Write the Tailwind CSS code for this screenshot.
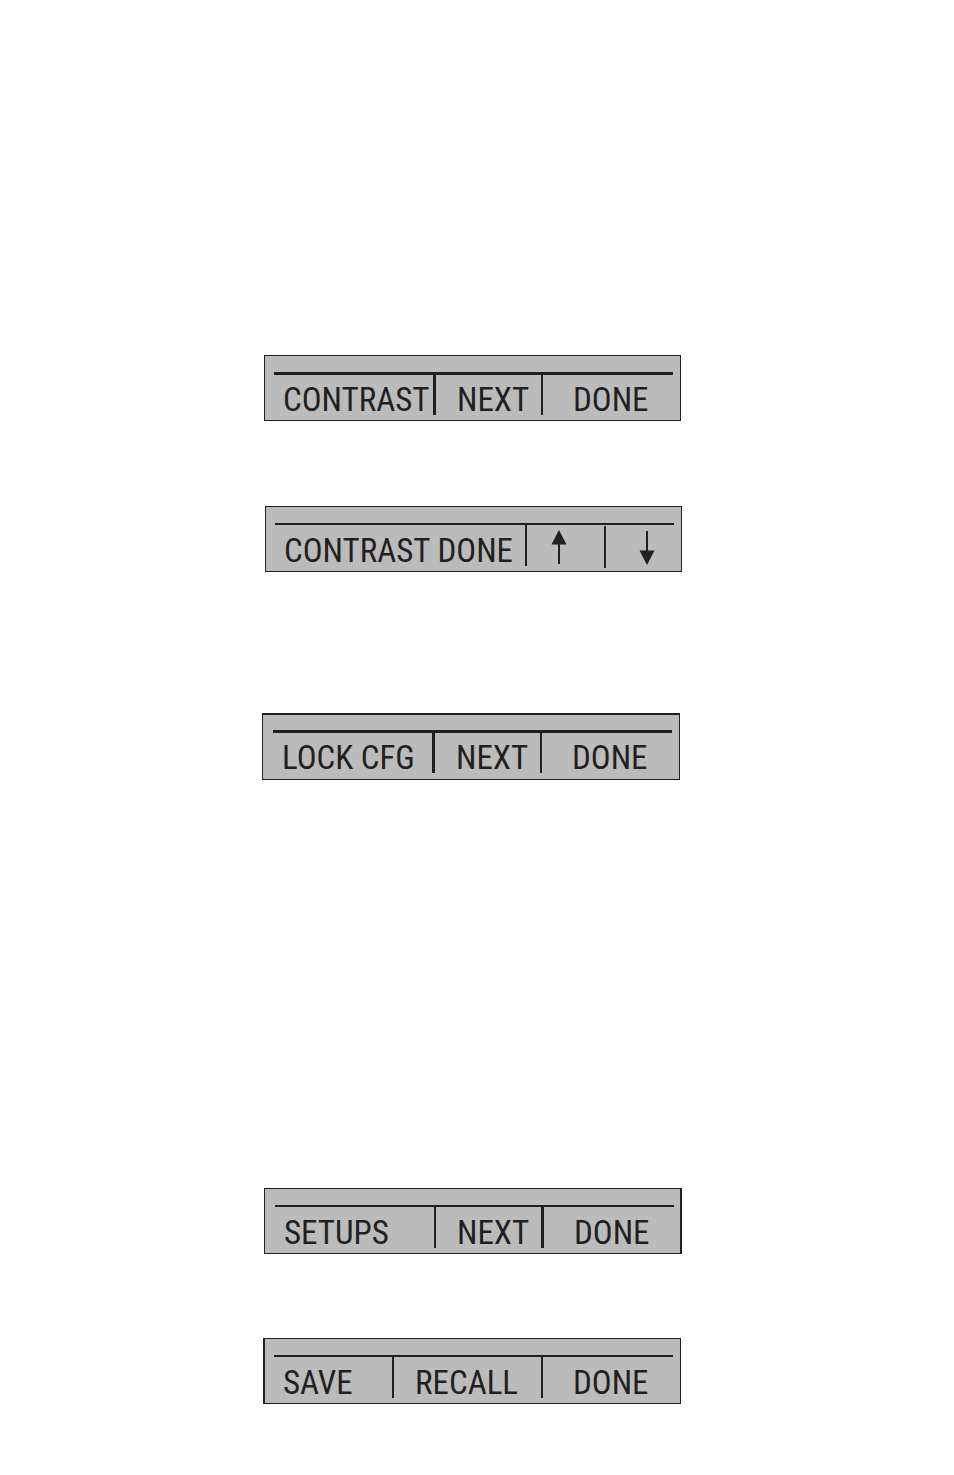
<!DOCTYPE html>
<html lang="en">
<head>
<meta charset="utf-8">
<meta name="viewport" content="width=device-width, initial-scale=1">
<title>Softkey menus</title>
<script src="https://cdn.jsdelivr.net/npm/@tailwindcss/browser@4"></script>
</head>
<body class="bg-white">
<main class="pt-[355px] pb-[71px] pl-[262px] pr-[272px] font-['Roboto_Condensed','Liberation_Sans_Narrow','Liberation_Sans',sans-serif] text-[33px] leading-[30px] text-[#231f20]">

  <nav aria-label="Contrast menu" class="ml-[2px] mr-px border border-[#231f20] bg-[#bbbbbb] pl-[9px] pr-[7px] pt-4 pb-[5px]">
    <div class="grid h-[43px] grid-cols-[159fr_108fr_132fr] border-t-3 border-[#231f20] whitespace-nowrap">
      <button type="button" class="pl-[9px] pt-[10px] text-left">CONTRAST</button>
      <button type="button" class="border-l-3 border-[#231f20] pl-[21px] pt-[10px] text-left">NEXT</button>
      <button type="button" class="border-l-2 border-[#231f20] pl-[30px] pt-[10px] text-left">DONE</button>
    </div>
  </nav>

  <nav aria-label="Contrast adjustment" class="mt-[85px] ml-[3px] border border-[#231f20] bg-[#bbbbbb] pl-[9px] pr-[7px] pt-4 pb-[3px]">
    <div class="grid h-[45px] grid-cols-[250fr_79fr_70fr] border-t-2 border-[#231f20] whitespace-nowrap">
      <button type="button" class="mb-[2px] pl-[9px] pt-[11px] text-left">CONTRAST DONE</button>
      <button type="button" aria-label="Increase contrast" class="mb-[2px] flex items-start border-l-2 border-[#231f20] pl-6 pt-[5px]">
        <svg class="h-[34px] w-4" viewBox="0 0 16 34" fill="#231f20" aria-hidden="true"><path d="M8 0L15.500 14.500H9V34H7V14.500H.5Z"/></svg>
      </button>
      <button type="button" aria-label="Decrease contrast" class="mt-px flex items-start border-l-2 border-[#231f20] pl-[33px] pt-[5px]">
        <svg class="h-[34px] w-4" viewBox="0 0 16 34" fill="#231f20" aria-hidden="true"><path d="M8 34L15.500 19.500H9V0H7V19.500H.5Z"/></svg>
      </button>
    </div>
  </nav>

  <nav aria-label="Lock configuration menu" class="mt-[141px] mr-[2px] border border-t-2 border-[#231f20] bg-[#bbbbbb] pl-[10px] pr-[7px] pt-[15px] pb-[6px]">
    <div class="grid h-[43px] grid-cols-[159fr_108fr_132fr] border-t-3 border-[#231f20] whitespace-nowrap">
      <button type="button" class="pl-[9px] pt-[10px] text-left">LOCK CFG</button>
      <button type="button" class="border-l-3 border-[#231f20] pl-[21px] pt-[10px] text-left">NEXT</button>
      <button type="button" class="border-l-2 border-[#231f20] pl-[30px] pt-[10px] text-left">DONE</button>
    </div>
  </nav>

  <nav aria-label="Setups menu" class="mt-[408px] ml-[2px] border border-r-2 border-[#231f20] bg-[#bbbbbb] pl-[10px] pr-[6px] pt-4 pb-[5px]">
    <div class="grid h-[43px] grid-cols-[159fr_107fr_133fr] border-t-2 border-[#231f20] whitespace-nowrap">
      <button type="button" class="pl-[9px] pt-[11px] text-left">SETUPS</button>
      <button type="button" class="border-l-2 border-[#231f20] pl-[21px] pt-[11px] text-left">NEXT</button>
      <button type="button" class="border-l-3 border-[#231f20] pl-[30px] pt-[11px] text-left">DONE</button>
    </div>
  </nav>

  <nav aria-label="Save and recall menu" class="mt-[84px] ml-px mr-px border border-l-2 border-[#231f20] bg-[#bbbbbb] pl-[9px] pr-[7px] pt-4 pb-[5px]">
    <div class="grid h-[43px] grid-cols-[118fr_149fr_132fr] border-t-2 border-[#231f20] whitespace-nowrap">
      <button type="button" class="pl-[9px] pt-[11px] text-left">SAVE</button>
      <button type="button" class="border-l-2 border-[#231f20] pl-[21px] pt-[11px] text-left">RECALL</button>
      <button type="button" class="border-l-2 border-[#231f20] pl-[30px] pt-[11px] text-left">DONE</button>
    </div>
  </nav>
</main>
</body>
</html>
